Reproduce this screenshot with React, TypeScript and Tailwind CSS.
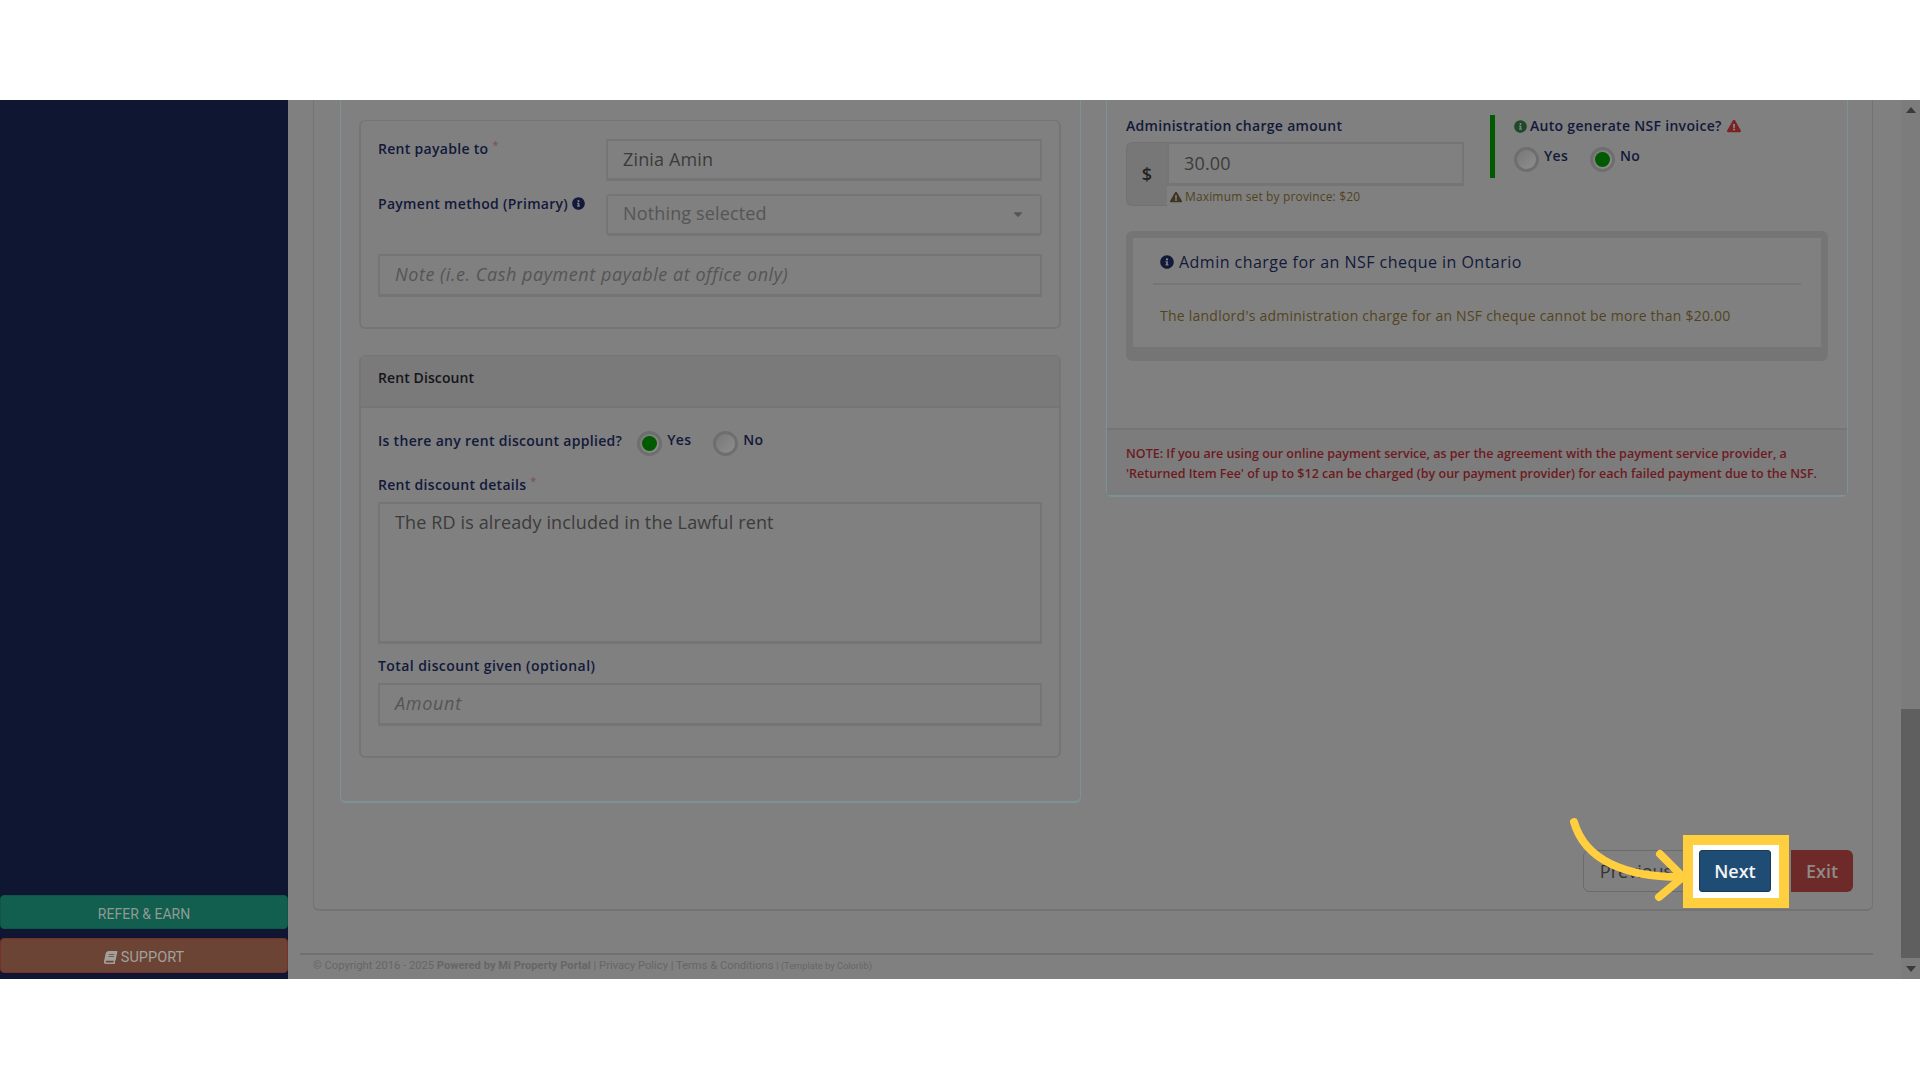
import { FaBook, FaCaretDown, FaExclamationTriangle, FaInfoCircle } from "react-icons/fa";

const labelBase = "text-[14px] font-semibold text-[#12193a] leading-5";
const labelCls = `${labelBase} tracking-[0.3px]`;
const inputCls = "flex items-center border-2 border-[#757575] border-b-[3px] bg-[#808080] px-[15px] text-[18px]";

function Radio({ on }: { on?: boolean }) {
  return (
    <span className="flex h-[25px] w-[25px] shrink-0 items-center justify-center rounded-full border-[3px] border-[#6e6e6e] bg-gradient-to-br from-[#787878] to-[#8e8e8e]">
      {on && <span className="h-[15px] w-[15px] rounded-full bg-[#005a00]" />}
    </span>
  );
}

function RadioPair({ yes }: { yes: boolean }) {
  return (
    <div className="flex gap-[22px]">
      <div className="flex items-start gap-[5px]">
        <Radio on={yes} />
        <span className="text-[14px] font-semibold leading-[18px] tracking-[0.3px] text-[#12193a]">Yes</span>
      </div>
      <div className="flex items-start gap-[5px]">
        <Radio on={!yes} />
        <span className="text-[14px] font-semibold leading-[18px] tracking-[0.3px] text-[#12193a]">No</span>
      </div>
    </div>
  );
}

function Req() {
  return <sup className="ml-1 text-[11px] text-[#7d5555]">*</sup>;
}

export default function App() {
  return (
    <div className="flex h-screen w-full flex-col overflow-hidden bg-white font-['Open_Sans',sans-serif]">
      <div className="h-[100px] shrink-0 bg-white" />
      <div className="flex h-[879px] shrink-0">
        {/* sidebar */}
        <aside className="flex w-[288px] shrink-0 flex-col justify-end bg-[#0e1631] pb-[6px] font-['Roboto',sans-serif]">
          <div className="flex h-[34px] items-center justify-center rounded-sm border border-[#0f5548] bg-[#135f4f] pt-[4px] text-[14px] text-[#8f9a95]">
            REFER &amp; EARN
          </div>
          <div className="mt-[9px] flex h-[35px] items-center justify-center gap-1 rounded-sm border border-[#7a2f2a] bg-[#6b4436] pt-[4px] text-[14.5px] text-[#a3a09c]">
            <FaBook className="h-[13px] w-[13px] -skew-x-12" />
            SUPPORT
          </div>
        </aside>

        {/* content */}
        <main className="flex min-w-0 flex-1 flex-col overflow-hidden bg-[#808080]">
          <div className="ml-[25px] mr-[28px] h-[811px] shrink-0 rounded-b-md border-x border-b-2 border-[#737373] px-[26px]">
            <div className="grid grid-cols-[741px_742px] gap-[25px]">
              {/* left panel */}
              <section className="h-[703px] rounded-b-md border-x border-b-2 border-[#7b9296] pl-[18px] pr-[19px]">
                <div className="mt-5 h-[209px] rounded-md border-2 border-t border-[#757575] bg-[#808080]">
                  <div className="px-[17px] pt-[18px]">
                    <div className="flex h-[42px]">
                      <div className={`w-[228px] shrink-0 ${labelCls}`}>Rent payable to<Req /></div>
                      <div className={`h-[42px] flex-1 tracking-[0.15px] text-[#3b3b3b] ${inputCls}`}>Zinia Amin</div>
                    </div>
                    <div className="mt-[13px] flex h-[42px]">
                      <div className={`flex w-[228px] shrink-0 items-start gap-1 ${labelCls}`}>
                        Payment method (Primary)
                        <FaInfoCircle className="mt-[3px] h-[13px] w-[13px] text-[#12193a]" />
                      </div>
                      <div className={`h-[42px] flex-1 justify-between rounded-sm pb-[2px] tracking-[0.15px] text-[#555] ${inputCls}`}>
                        Nothing selected
                        <FaCaretDown className="h-[14px] w-[14px] text-[#555]" />
                      </div>
                    </div>
                    <div className={`mt-[18px] h-[43px] pb-[2px] italic tracking-[0.55px] text-[#555] ${inputCls}`}>Note (i.e. Cash payment payable at office only)</div>
                  </div>
                </div>

                <div className="mt-[26px] h-[403px] rounded-md border-2 border-t border-[#757575]">
                  <div className="flex h-[52px] items-center border-b-2 border-[#757575] bg-[#7a7a7a] px-[17px] pb-[7px] text-[14px] font-semibold tracking-[0.1px] text-[#15151a]">
                    Rent Discount
                  </div>
                  <div className="px-[17px]">
                    <div className="mt-[23px] flex items-start gap-[15px]">
                      <span className={labelCls}>Is there any rent discount applied?</span>
                      <RadioPair yes />
                    </div>
                    <div className={`mt-[19px] ${labelCls}`}>Rent discount details<Req /></div>
                    <div className="mt-[7px] h-[142px] border-2 border-b-[3px] border-[#757575] px-[15px] pt-[5px] text-[18px] tracking-[0.13px] text-[#3b3b3b]">
                      The RD is already included in the Lawful rent
                    </div>
                    <div className={`mt-[12px] ${labelBase} tracking-[0.42px]`}>Total discount given (optional)</div>
                    <div className={`mt-[7px] h-[43px] pb-[2px] italic tracking-[0.7px] text-[#555] ${inputCls}`}>Amount</div>
                  </div>
                </div>
              </section>

              {/* right panel */}
              <section className="flex h-[397px] flex-col rounded-b-md border-x border-b-2 border-[#7b9296]">
                <div className="flex-1 px-[19px] pt-[16px]">
                  <div className="flex">
                    <div className="w-[338px] shrink-0">
                      <div className={labelCls}>Administration charge amount</div>
                      <div className="mt-[6px] flex">
                        <div className="flex h-[64px] w-[41px] shrink-0 items-center justify-center rounded-l-md border border-r-0 border-[#727272] bg-[#777] text-[18px] font-semibold text-[#222]">
                          $
                        </div>
                        <div className="flex-1">
                          <div className={`h-[44px] tracking-[0.15px] text-[#3b3b3b] ${inputCls}`}>30.00</div>
                          <div className="mt-[2px] flex items-center gap-[3px] pl-[3px] text-[12px] tracking-[0.15px] text-[#51431f]">
                            <FaExclamationTriangle className="h-[12px] w-[12px] text-[#3f3520]" />
                            Maximum set by province: $20
                          </div>
                        </div>
                      </div>
                    </div>
                    <div className="ml-[26px] -mt-[1px] h-[63px] w-[5px] shrink-0 bg-[#005a00]" />
                    <div className="ml-[19px]">
                      <div className={`flex items-center gap-[3px] ${labelCls}`}>
                        <FaInfoCircle className="h-[13px] w-[13px] text-[#1f4a2a]" />
                        Auto generate NSF invoice?
                        <FaExclamationTriangle className="ml-[2px] h-[14px] w-[14px] text-[#7b2222]" />
                      </div>
                      <div className="mt-[11px]">
                        <RadioPair yes={false} />
                      </div>
                    </div>
                  </div>

                  <div className="mt-[25px] h-[130px] rounded-md bg-[#757575] px-[7px] pt-[7px]">
                    <div className="h-[109px] bg-[#808080] px-[20px] pt-[12px]">
                      <div className="flex items-center gap-[5px] border-b-2 border-[#767676] px-[7px] pb-[9px] text-[16px] tracking-[0.47px] text-[#12193a]">
                        <FaInfoCircle className="h-[14px] w-[14px]" />
                        Admin charge for an NSF cheque in Ontario
                      </div>
                      <div className="mt-[20px] px-[7px] text-[14px] tracking-[0.24px] text-[#54441e]">
                        The landlord's administration charge for an NSF cheque cannot be more than $20.00
                      </div>
                    </div>
                  </div>
                </div>
                <div className="h-[67px] border-t-2 border-[#757575] bg-[#7c7c7c] px-[19px] pt-[14px] text-[12.5px] font-semibold leading-5 text-[#6d1a1f]">
                  NOTE: If you are using our online payment service, as per the agreement with the payment service provider, a
                  <br />
                  'Returned Item Fee' of up to $12 can be charged (by our payment provider) for each failed payment due to the NSF.
                </div>
              </section>
            </div>

            {/* buttons */}
            <div className="-mr-[7px] mt-[47px] flex items-center justify-end">
              <div className="flex h-[42px] w-[106px] items-center justify-center rounded-md border border-[#6b6b6b] text-[18px] text-[#333]">
                Previous
              </div>
              <div className="relative ml-[10px]">
                <div className="absolute -bottom-[16px] -left-[16px] -right-[18px] -top-[15px] border-[10px] border-[#ffcf3f] bg-white" />
                <svg className="absolute -left-[129px] -top-[35px] z-10" width="120" height="90" viewBox="0 0 120 90" fill="none" stroke="#ffcf3f" strokeWidth="8" strokeLinecap="round" strokeLinejoin="round">
                  <path d="M4 7C15 45 55 62 110 62" />
                  <path d="M90 39L113 62L89 82" />
                </svg>
                <div className="relative flex h-[42px] w-[72px] items-center justify-center rounded-[3px] border border-[#173a58] bg-[#1f4c74] text-[18px] font-semibold text-[#f2f4f6]">
                  Next
                </div>
              </div>
              <div className="relative ml-[20px] flex h-[42px] w-[62px] items-center justify-center rounded-r-md bg-[#6e2a28] text-[18px] font-semibold text-[#8f8a88]">
                Exit
              </div>
            </div>
          </div>

          {/* footer */}
          <div className="ml-[12px] mr-[28px] mt-[42px] flex h-[26px] items-center border-t-2 border-[#707070] pb-[2px] pl-[13px] font-['Roboto',sans-serif] text-[11.2px] text-[#666]">
            © Copyright 2016 - 2025&nbsp;<b className="font-bold">Powered by Mi Property Portal</b>&nbsp;| Privacy Policy | Terms &amp; Conditions&nbsp;
            <span className="text-[9.3px]">| (Template by Colorlib)</span>
          </div>
        </main>

        {/* scrollbar */}
        <div className="flex w-[19px] shrink-0 flex-col bg-[#7c7c7c]">
          <div className="flex h-[19px] items-center justify-center">
            <span className="h-0 w-0 border-x-[5px] border-b-[6px] border-x-transparent border-b-[#3a3a3a]" />
          </div>
          <div className="h-[590px] shrink-0" />
          <div className="h-[249px] w-full bg-[#5f5f5f]" />
          <div className="flex flex-1 items-center justify-center">
            <span className="h-0 w-0 border-x-[5px] border-t-[6px] border-x-transparent border-t-[#3a3a3a]" />
          </div>
        </div>
      </div>
      <div className="flex-1 bg-white" />
    </div>
  );
}
